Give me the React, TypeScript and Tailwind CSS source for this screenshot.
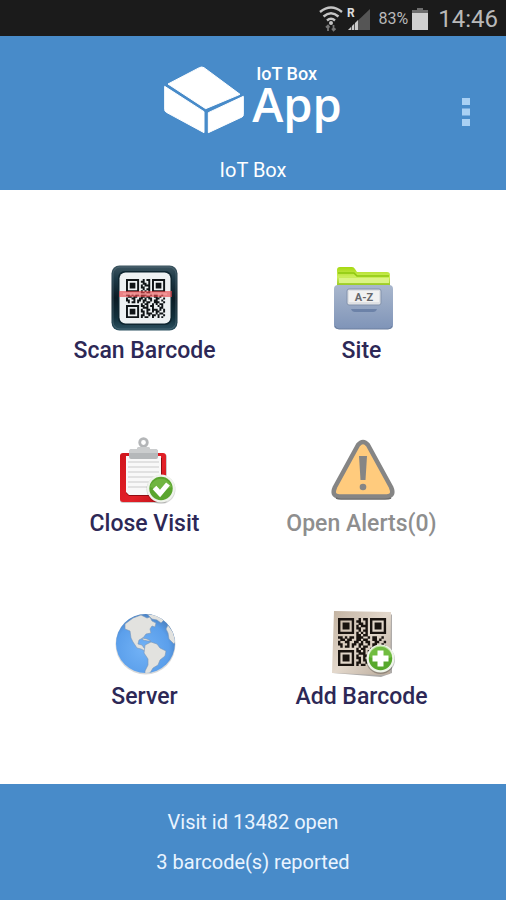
import type { ReactNode } from "react";

const QR_ROWS = [
  "#######..#.##.#######",
  "#.....#.##..#.#.....#",
  "#.###.#..##.#.#.###.#",
  "#.###.#.#.###.#.###.#",
  "#.###.#.##..#.#.###.#",
  "#.....#..#.##.#.....#",
  "#######.#.#.#.#######",
  "........##.##........",
  "##.#.##.###..#.##..#.",
  ".##.##..##.##..##.#..",
  "#..##..##.#.##..##..#",
  "##..#.##.##..#.##..#.",
  ".#.##.#..#.##..###..#",
  "........#.##..#.#.##.",
  "#######.##.#.##..#.#.",
  "#.....#..###..#...##.",
  "#.###.#.#..##.###.#.#",
  "#.###.#.##.#..#.##..#",
  "#.###.#..#.###..#.##.",
  "#.....#.##..#.##.#..#",
  "#######.#.##..#..#.#.",
];

function QrCode({ x, y, size, fill }: { x: number; y: number; size: number; fill: string }) {
  const d = QR_ROWS.flatMap((row, r) =>
    row.split("").map((c, i) => (c === "#" ? `M${i} ${r}h1.05v1.05h-1.05z` : "")),
  ).join("");
  return <path d={d} fill={fill} transform={`translate(${x} ${y}) scale(${size / 21})`} />;
}

function Icon({ children }: { children: ReactNode }) {
  return (
    <svg viewBox="0 0 68 68" className="size-[68px] overflow-visible" aria-hidden="true">
      {children}
    </svg>
  );
}

function ScanIcon() {
  return (
    <Icon>
      <defs>
        <linearGradient id="scan-frame" x1="0" y1="0" x2="0" y2="1">
          <stop offset="0" stopColor="#3d5560" />
          <stop offset="0.2" stopColor="#1d3a47" />
          <stop offset="0.5" stopColor="#0b1b24" />
          <stop offset="0.8" stopColor="#12303c" />
          <stop offset="1" stopColor="#2d5261" />
        </linearGradient>
      </defs>
      <rect x="0.5" y="0.5" width="66" height="65" rx="8" fill="url(#scan-frame)" />
      <rect x="2" y="2" width="63" height="62" rx="7" fill="none" stroke="#5f7a86" strokeOpacity="0.5" />
      <rect x="7" y="6" width="54" height="54" rx="7" fill="#0f2731" />
      <rect x="8.500" y="7.500" width="51" height="51" rx="6" fill="#eef2f3" />
      <QrCode x={15} y={14} size={39} fill="#101517" />
      <rect x="8" y="26" width="53" height="6" fill="#e8464b" fillOpacity="0.65" />
      <rect x="12" y="28" width="44" height="2" fill="#f5a3a3" fillOpacity="0.6" />
    </Icon>
  );
}

function FolderIcon() {
  return (
    <Icon>
      <defs>
        <linearGradient id="folder-green" x1="0" y1="0" x2="0" y2="1">
          <stop offset="0" stopColor="#a5d80f" />
          <stop offset="0.5" stopColor="#cdee5d" />
          <stop offset="1" stopColor="#8fc31a" />
        </linearGradient>
        <linearGradient id="folder-body" x1="0" y1="0" x2="0" y2="1">
          <stop offset="0" stopColor="#a9b7cd" />
          <stop offset="1" stopColor="#7f94b8" />
        </linearGradient>
      </defs>
      <path d="M9 20V5q0-3 3-3h12q2 0 3 2l2 3h30q3 0 3 3v12H9z" fill="url(#folder-green)" />
      <path d="M10 8h16l3 3h32" fill="none" stroke="#8ec70f" strokeWidth="1.5" />
      <path d="M11 13h50v5H11z" fill="#dcf486" />
      <path d="M6 24q0-4 4-4h51q4 0 4 4v36q0 4-4 4H10q-4 0-4-4z" fill="url(#folder-body)" />
      <path d="M7 61q1 3 4 3h49q3 0 4-3" fill="none" stroke="#6c7f9f" />
      <rect x="19" y="24" width="34" height="16" rx="2" fill="#dfe1e4" stroke="#8292ac" />
      <rect x="21" y="26" width="30" height="11" fill="#f1f1f1" />
      <text x="36" y="35.5" textAnchor="middle" fontSize="11" fontWeight="700" fill="#66686c">
        A-Z
      </text>
      <path d="M23 44q1 3 4 3h18q3 0 4-3z" fill="#6c82a8" />
    </Icon>
  );
}

function ClipboardIcon() {
  return (
    <Icon>
      <defs>
        <linearGradient id="clip-red" x1="0" y1="0" x2="1" y2="1">
          <stop offset="0" stopColor="#d0151c" />
          <stop offset="0.6" stopColor="#e32128" />
          <stop offset="1" stopColor="#b90f17" />
        </linearGradient>
      </defs>
      <rect x="9" y="16" width="47" height="49" rx="3" fill="#000000" fillOpacity="0.2" />
      <rect x="9" y="15" width="46" height="49" rx="3" fill="url(#clip-red)" />
      <path d="M15 20h36v38H18l-3-3z" fill="#8e0d12" />
      <path d="M15 18h35v39H18l-3-3z" fill="#f8f8f8" />
      <path d="M17 24h31M17 29h31M17 34h31M17 39h31M17 44h31M17 49h31" stroke="#c9c9c9" strokeWidth="1.2" />
      <circle cx="32.5" cy="4.5" r="3.8" fill="#ffffff" stroke="#b4b6b8" strokeWidth="2.8" />
      <path d="M27 9h11l1 2h5q3 0 3 3v5q0 2-2 2H20q-2 0-2-2v-5q0-3 3-3h5z" fill="#b5b8ba" />
      <path d="M27 9h11l1 2h5q3 0 3 3v1H18v-1q0-3 3-3h5z" fill="#cbcdce" />
      <circle cx="50" cy="51.5" r="14.5" fill="#000000" fillOpacity="0.15" />
      <circle cx="50" cy="50.5" r="14" fill="#eff3ec" />
      <circle cx="50" cy="50.5" r="11.7" fill="#5aa52e" />
      <path d="M39 49a11.5 11.5 0 0 1 22 0q-11 5-22 0z" fill="#86c653" fillOpacity="0.5" />
      <path d="M43.5 49.5l5.500 6 8-9.500" fill="none" stroke="#ffffff" strokeWidth="5" />
    </Icon>
  );
}

function AlertIcon() {
  return (
    <Icon>
      <path
        d="M30 7q5-6 10 0l23 42q4 9-4 9.500H11q-8-.5-4-9.500z"
        fill="#ffcb7d"
        stroke="#858585"
        strokeWidth="4.500"
        strokeLinejoin="round"
      />
      <path d="M8 60q2 1 5 1h44q4 0 6-1" fill="none" stroke="#6c6c6c" strokeWidth="1.5" />
      <path d="M31 18h8l-1.500 24h-5z" fill="#858585" />
      <circle cx="35" cy="49" r="3.300" fill="#858585" />
    </Icon>
  );
}

function GlobeIcon() {
  return (
    <Icon>
      <defs>
        <radialGradient id="globe-sea" cx="0.45" cy="0.6" r="0.6">
          <stop offset="0" stopColor="#72b2f6" />
          <stop offset="0.75" stopColor="#5b9feb" />
          <stop offset="1" stopColor="#4c83c4" />
        </radialGradient>
        <clipPath id="globe-clip">
          <circle cx="34.5" cy="32.500" r="29.500" />
        </clipPath>
      </defs>
      <circle cx="34.500" cy="33.500" r="30" fill="#000000" fillOpacity="0.15" />
      <circle cx="34.500" cy="32.500" r="29.500" fill="url(#globe-sea)" />
      <g clipPath="url(#globe-clip)" fill="#e2e2df" stroke="#7796b8" strokeWidth="0.6">
        <path d="M14 13l8-6 8-3 6 3 3-1 2 4 4 2-1 4-3-1-2 3 1 4-5 1-3 4-4 2-1 4 4 1 2 3 4 1 2 4-3-1-6-3-4-1-4-6-2-4-1-7-5-2z" />
        <path d="M36 3l10 1 7 5-3 3-4-3-5-1z" />
        <path d="M31 27l5 1 4 2-3 0-5-1z" />
        <path d="M34 34l6-3 6 2 3 4 6 3-1 5-5 4-2 5-5 3-3 5-5 2 0-4 3-6v-6l-4-6z" />
        <path d="M57 14l5 7 3 9-2 3-5-5-1-6-2-4z" />
      </g>
    </Icon>
  );
}

function AddIcon() {
  return (
    <Icon>
      <defs>
        <linearGradient id="add-paper" x1="0" y1="0" x2="1" y2="1">
          <stop offset="0" stopColor="#c2b2a0" />
          <stop offset="0.5" stopColor="#e3d8cc" />
          <stop offset="1" stopColor="#b9aa9a" />
        </linearGradient>
      </defs>
      <path d="M5 62l48 4 11-4V3z" fill="#4b4540" fillOpacity="0.45" />
      <path d="M6 0l57 1-1 62-10 1-48-2z" fill="url(#add-paper)" />
      <QrCode x={10} y={7} size={48} fill="#19130f" />
      <circle cx="52.500" cy="48.500" r="14.500" fill="#000000" fillOpacity="0.25" />
      <circle cx="52.500" cy="47.500" r="14" fill="#eff5ea" />
      <circle cx="52.500" cy="47.500" r="11.700" fill="#57a82c" />
      <path d="M41 46a11.500 11.500 0 0 1 23 0q-11 5-23 0z" fill="#8ad053" fillOpacity="0.5" />
      <path d="M52.500 39.500v16M44.500 47.500h16" stroke="#ffffff" strokeWidth="6" />
    </Icon>
  );
}

const ACTIONS = [
  { label: "Scan Barcode", icon: <ScanIcon /> },
  { label: "Site", icon: <FolderIcon /> },
  { label: "Close Visit", icon: <ClipboardIcon /> },
  { label: "Open Alerts(0)", icon: <AlertIcon />, disabled: true },
  { label: "Server", icon: <GlobeIcon /> },
  { label: "Add Barcode", icon: <AddIcon /> },
];

function StatusBar() {
  return (
    <div className="flex h-9 items-center justify-end bg-[#1b1b1b] pt-0.5 pr-2 text-[#b9b9b9]">
      <svg viewBox="0 0 24 26" className="mr-1 h-[26px] w-6" aria-hidden="true">
        <g fill="none" stroke="#c4c4c4" strokeWidth="2.400">
          <path d="M1 6q11-9 22 0" />
          <path d="M4.500 10.500q7.500-6.500 15 0" />
          <path d="M8 14.500q4-3.500 8 0" />
        </g>
        <circle cx="12" cy="17" r="2" fill="#c4c4c4" />
        <path d="M9 25v-5M7 21.500l2-2 1.500 2M14.500 19v5M13 22.500l1.500 2 2-2" fill="none" stroke="#777777" strokeWidth="1.800" />
      </svg>
      <svg viewBox="0 0 24 24" className="mr-2 size-6" aria-hidden="true">
        <path d="M1 23L23 2v21z" fill="#555555" />
        <path d="M1 23l3-3v3zM5 23v-4l2-2v6zM8 23v-7l3-3v10z" fill="#cccccc" />
        <text x="0" y="10" fontSize="12" fontWeight="700" fill="#dddddd">
          R
        </text>
      </svg>
      <span className="text-base">83%</span>
      <svg viewBox="0 0 16 22" className="mr-2.5 ml-1 h-[22px] w-4" aria-hidden="true">
        <path d="M5 0h6v2h5v20H0V2h5z" fill="#6e6e6e" />
        <path d="M0 5h16v17H0z" fill="#cfcfcf" />
      </svg>
      <span className="text-2xl">14:46</span>
    </div>
  );
}

function Header() {
  return (
    <header className="bg-[#488bc9] pt-[30px] pb-2 text-white">
      <div className="grid grid-cols-[1fr_auto_1fr]">
        <div className="col-start-2 flex gap-2">
          <svg viewBox="36 33 240 204" className="h-[68px] w-20" aria-hidden="true">
            <g fill="#ffffff" stroke="#ffffff" strokeWidth="3" strokeLinejoin="round">
              <path d="M48 87L142 38q7-4 14 0L264 118l-103 43z" />
              <path d="M38 94l118 76v63L43 172q-5-3-5-8z" />
              <path d="M274 124l-105 49v60l101-47q4-2 4-7z" />
            </g>
          </svg>
          <div>
            <p className="pl-1 text-lg leading-4 font-medium">IoT Box</p>
            <p className="font-['Open_Sans',sans-serif] text-[47px] leading-[44px] font-semibold">App</p>
          </div>
        </div>
        <button type="button" aria-label="More options" className="mr-8 mb-2 self-end justify-self-end px-1">
          <svg viewBox="0 0 8 28" className="h-7 w-2" aria-hidden="true">
            <path d="M0 0h8v7H0zM0 10.500h8v7H0zM0 21h8v7H0z" fill="#a9d0f3" />
          </svg>
        </button>
      </div>
      <h1 className="mt-6 text-center text-xl leading-6">IoT Box</h1>
    </header>
  );
}

export default function App() {
  return (
    <div className="flex min-h-screen flex-col bg-white font-[Roboto,sans-serif]">
      <StatusBar />
      <Header />
      <main className="grid flex-1 grid-cols-2 grid-rows-3 px-9 pt-[38px] pb-9">
        {ACTIONS.map(({ label, icon, disabled }) => (
          <button
            key={label}
            type="button"
            disabled={disabled}
            className="flex flex-col items-center justify-center gap-1 font-medium text-[#2d2856] disabled:text-[#8e8e8e]"
          >
            {icon}
            <span className="text-[23px] leading-7 whitespace-nowrap">{label}</span>
          </button>
        ))}
      </main>
      <footer className="flex flex-col gap-4 bg-[#488bc9] py-[26px] text-center text-xl leading-6 text-[#eaf4ff]">
        <p>Visit id 13482 open</p>
        <p>3 barcode(s) reported</p>
      </footer>
    </div>
  );
}
